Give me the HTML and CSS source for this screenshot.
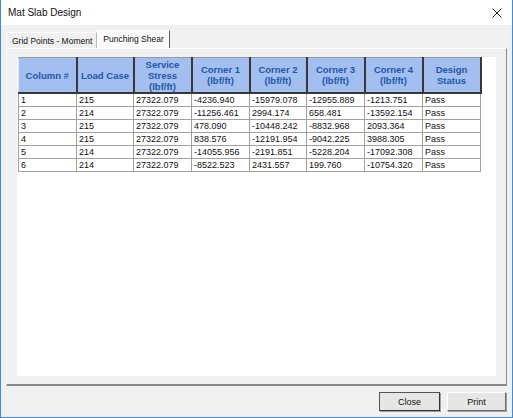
FILE: index.html
```html
<!DOCTYPE html>
<html lang="en">
<head>
    <meta charset="UTF-8">
    <title>Mat Slab Design</title>
    <link rel="stylesheet" href="styles.css">
</head>
<body>
    <div class="window">
        <div class="titlebar">
            <span class="title">Mat Slab Design</span>
            <svg class="close-x" width="10" height="10" viewBox="0 0 10 10">
                <path d="M0.5 0.5 L9.5 9.5 M9.5 0.5 L0.5 9.5" stroke="#222" stroke-width="1" fill="none"/>
            </svg>
        </div>
        <div class="content">
            <div class="tabs">
                <div class="tab">Grid Points - Moment</div>
                <div class="tab active">Punching Shear</div>
            </div>
            <div class="panel">
                <div class="grid">
                    <table class="results">
                        <colgroup>
                            <col style="width:58px"><col style="width:57px"><col style="width:58px"><col style="width:58px">
                            <col style="width:57px"><col style="width:58px"><col style="width:58px"><col style="width:58px">
                        </colgroup>
                        <thead>
                            <tr>
                                <th>Column #</th>
                                <th>Load Case</th>
                                <th>Service Stress (lbf/ft)</th>
                                <th>Corner 1 (lbf/ft)</th>
                                <th>Corner 2 (lbf/ft)</th>
                                <th>Corner 3 (lbf/ft)</th>
                                <th>Corner 4 (lbf/ft)</th>
                                <th>Design Status</th>
                            </tr>
                        </thead>
                        <tbody>
                            <tr><td>1</td><td>215</td><td>27322.079</td><td>-4236.940</td><td>-15979.078</td><td>-12955.889</td><td>-1213.751</td><td>Pass</td></tr>
                            <tr><td>2</td><td>214</td><td>27322.079</td><td>-11256.461</td><td>2994.174</td><td>658.481</td><td>-13592.154</td><td>Pass</td></tr>
                            <tr><td>3</td><td>215</td><td>27322.079</td><td>478.090</td><td>-10448.242</td><td>-8832.968</td><td>2093.364</td><td>Pass</td></tr>
                            <tr><td>4</td><td>215</td><td>27322.079</td><td>838.576</td><td>-12191.954</td><td>-9042.225</td><td>3988.305</td><td>Pass</td></tr>
                            <tr><td>5</td><td>214</td><td>27322.079</td><td>-14055.956</td><td>-2191.851</td><td>-5228.204</td><td>-17092.308</td><td>Pass</td></tr>
                            <tr><td>6</td><td>214</td><td>27322.079</td><td>-8522.523</td><td>2431.557</td><td>199.760</td><td>-10754.320</td><td>Pass</td></tr>
                        </tbody>
                    </table>
                </div>
            </div>
            <div class="buttons">
                <button class="btn default">Close</button>
                <button class="btn">Print</button>
            </div>
        </div>
    </div>
</body>
</html>
```

FILE: styles.css
```css
body {
    margin: 0;
    padding: 0;
    font-family: "Liberation Sans", Arial, sans-serif;
    background-color: #ffffff;
}

.window {
    width: 513px;
    height: 418px;
    box-sizing: border-box;
    border-left: 1px solid #3c8fde;
    border-right: 1px solid #3c8fde;
    border-bottom: 1px solid #3c8fde;
    background-color: #f0f0f0;
    display: flex;
    flex-direction: column;
}

.titlebar {
    height: 25px;
    background-color: #ffffff;
    display: flex;
    align-items: center;
    justify-content: space-between;
    padding: 0 10px 0 7px;
}

.title {
    font-size: 10px;
    color: #111;
}

.content {
    flex: 1;
    display: flex;
    flex-direction: column;
    padding: 4px 5px 0 5px;
}

.tabs {
    display: flex;
    align-items: flex-end;
    height: 19px;
}

.tab {
    height: 15px;
    padding: 0 4px 0 5px;
    font-size: 8.5px;
    line-height: 16px;
    color: #111;
    border-top: 1px solid #ffffff;
    border-left: 1px solid #ffffff;
    border-right: 1px solid #b9b9b9;
}

.tab.active {
    height: 18px;
    line-height: 17px;
    background-color: #fafafa;
    border-right: 1px solid #5e5e5e;
    padding: 0 5px;
    margin-bottom: -1px;
}

.panel {
    height: 338px;
    box-sizing: border-box;
    border-top: 1px solid #ffffff;
    border-left: 1px solid #ffffff;
    border-right: 1px solid #8a8a8a;
    border-bottom: 2px solid #8a8a8a;
    padding: 8px 10px 0 10px;
}

.grid {
    height: 319px;
    background-color: #ffffff;
    padding-left: 1px;
}

.results {
    border-collapse: collapse;
    table-layout: fixed;
    width: 462px;
    font-size: 9px;
}

.results th {
    height: 34px;
    padding: 0 2px;
    background-color: #a2bff0;
    color: #2456a8;
    font-size: 9.5px;
    font-weight: bold;
    text-align: center;
    line-height: 11px;
    border-top: 1px solid #9a9a9a;
    border-left: 1px solid #d6e3f8;
    border-right: 2px solid #383838;
    border-bottom: 2px solid #383838;
}

.results td {
    height: 12px;
    padding: 0 2px;
    line-height: 12px;
    color: #111;
    white-space: nowrap;
    border: 1px solid #a0a0a0;
}

.buttons {
    display: flex;
    justify-content: flex-end;
    gap: 7px;
    margin-top: 6px;
    padding-right: 1px;
}

.btn {
    width: 61px;
    height: 19px;
    padding: 0;
    font-family: "Liberation Sans", Arial, sans-serif;
    font-size: 9px;
    color: #111;
    background-color: #e6e6e6;
    border: 1px solid;
    border-color: #ffffff #6a6a6a #6a6a6a #ffffff;
    box-shadow: 1px 1px 0 #a0a0a0;
}

.btn.default {
    border-color: #555 #333 #333 #555;
}

.btn + .btn {
    width: 59px;
}
```
